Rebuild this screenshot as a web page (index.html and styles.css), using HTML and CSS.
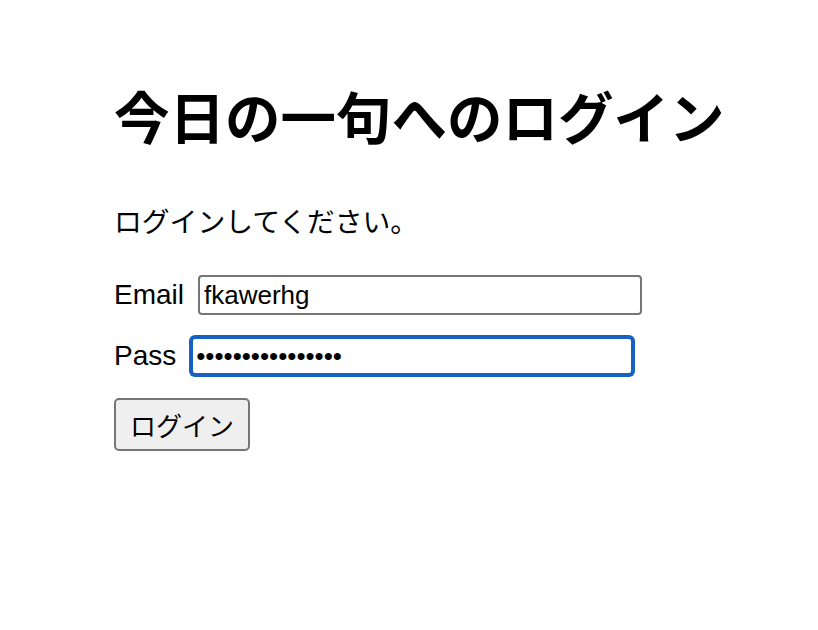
FILE: index.html
```html
<!DOCTYPE html>
<html lang="ja">
<head>
  <meta charset="UTF-8" />
  <title>今日の一句へのログイン</title>
  <link rel="stylesheet" href="styles.css">
</head>
<body>

<div class="container">
  <h1>今日の一句へのログイン</h1>

  <p class="lead">ログインしてください。</p>

  <form class="login">
    <div class="row">
      <label for="email">Email</label>
      <input type="text" id="email" value="fkawerhg" />
    </div>
    <div class="row">
      <label for="pass">Pass</label>
      <input type="password" id="pass" class="focused" value="abcdefghijklmnop" />
    </div>
    <button type="button">ログイン</button>
  </form>
</div>

</body>
</html>
```

FILE: styles.css
```css
body {
  font-family: "Liberation Sans", "Noto Sans CJK JP", sans-serif;
  background-color: #ffffff;
  color: #000000;
  margin: 0;
  padding: 0;
}

.container {
  padding: 84px 0 0 114px;
}

h1 {
  font-size: 55.5px;
  font-weight: 700;
  line-height: 72px;
  margin: 0 0 48px 0;
}

.lead {
  font-size: 27.8px;
  line-height: 38px;
  margin: 0 0 33px 0;
}

.login {
  display: flex;
  flex-direction: column;
  align-items: flex-start;
  gap: 21px;
}

.row {
  display: flex;
  align-items: center;
  gap: 14px;
}

label {
  font-size: 28px;
  line-height: 40px;
}

input {
  font-family: "Liberation Sans", "Noto Sans CJK JP", sans-serif;
  font-size: 26px;
  width: 444px;
  height: 40px;
  box-sizing: border-box;
  padding: 0 4px;
  border: 2px solid #767676;
  border-radius: 4px;
  color: #000000;
  background: #ffffff;
  outline: none;
}

input.focused {
  border: 3px solid #1760c4;
  border-radius: 5px;
  padding: 0 3px;
  box-shadow: 0 0 0 1px #1760c4;
}

button {
  font-family: "Liberation Sans", "Noto Sans CJK JP", sans-serif;
  font-size: 26px;
  height: 53px;
  padding: 0 14px;
  margin-top: 1px;
  background-color: #efefef;
  color: #000000;
  border: 2px solid #767676;
  border-radius: 5px;
}
```
